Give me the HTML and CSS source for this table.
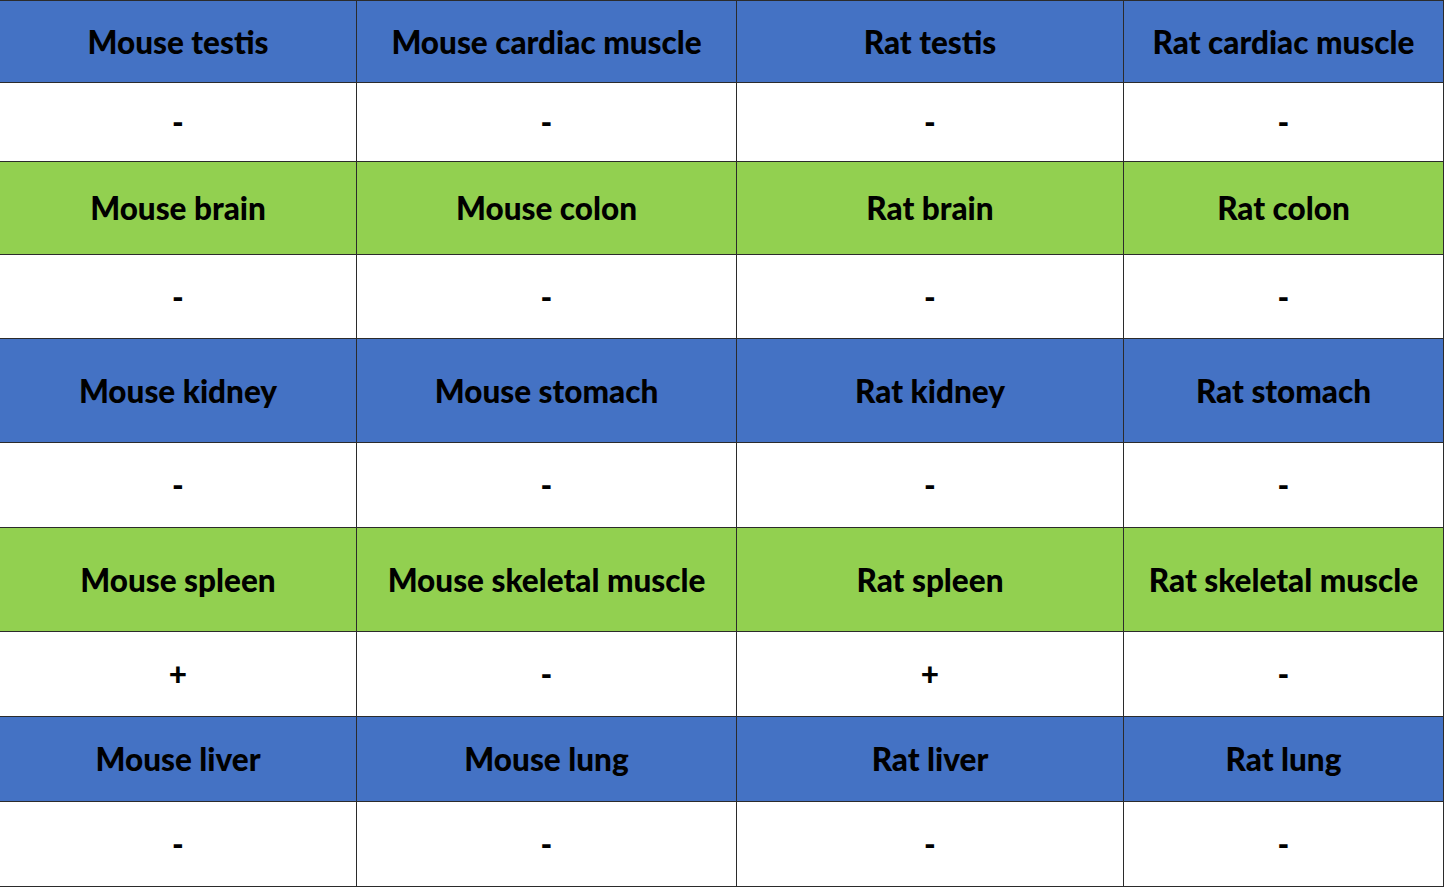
FILE: index.html
```html
<!DOCTYPE html>
<html>
<head>
<meta charset="utf-8">
<link rel="stylesheet" href="styles.css">
</head>
<body>
<div class="table">
  <div class="cell blue">Mouse testis</div>
  <div class="cell blue">Mouse cardiac muscle</div>
  <div class="cell blue">Rat testis</div>
  <div class="cell blue">Rat cardiac muscle</div>
  <div class="cell white">-</div>
  <div class="cell white">-</div>
  <div class="cell white">-</div>
  <div class="cell white">-</div>
  <div class="cell green">Mouse brain</div>
  <div class="cell green">Mouse colon</div>
  <div class="cell green">Rat brain</div>
  <div class="cell green">Rat colon</div>
  <div class="cell white">-</div>
  <div class="cell white">-</div>
  <div class="cell white">-</div>
  <div class="cell white">-</div>
  <div class="cell blue">Mouse kidney</div>
  <div class="cell blue">Mouse stomach</div>
  <div class="cell blue">Rat kidney</div>
  <div class="cell blue">Rat stomach</div>
  <div class="cell white">-</div>
  <div class="cell white">-</div>
  <div class="cell white">-</div>
  <div class="cell white">-</div>
  <div class="cell green">Mouse spleen</div>
  <div class="cell green">Mouse skeletal muscle</div>
  <div class="cell green">Rat spleen</div>
  <div class="cell green">Rat skeletal muscle</div>
  <div class="cell white">+</div>
  <div class="cell white">-</div>
  <div class="cell white">+</div>
  <div class="cell white">-</div>
  <div class="cell blue">Mouse liver</div>
  <div class="cell blue">Mouse lung</div>
  <div class="cell blue">Rat liver</div>
  <div class="cell blue">Rat lung</div>
  <div class="cell white">-</div>
  <div class="cell white">-</div>
  <div class="cell white">-</div>
  <div class="cell white">-</div>
</div>
</body>
</html>
```

FILE: styles.css
```css
html, body {
  margin: 0;
  padding: 0;
  background: #ffffff;
}
.table {
  display: grid;
  width: 1444px;
  grid-template-columns: 356px 379px 386px 319px;
  grid-template-rows: 81px 78px 92px 83px 103px 84px 103px 84px 84px 84px;
  gap: 1px;
  padding: 1px 1px 1px 0;
  box-sizing: border-box;
  background: #2b2b2b;
  font-family: Lato, "Open Sans", sans-serif;
  font-weight: 900;
  font-size: 31.5px;
  color: #000;
}
.cell {
  display: flex;
  align-items: center;
  justify-content: center;
  text-align: center;
  white-space: nowrap;
}
.blue { background: #4472c4; }
.green { background: #92d050; }
.white { background: #ffffff; }
```
